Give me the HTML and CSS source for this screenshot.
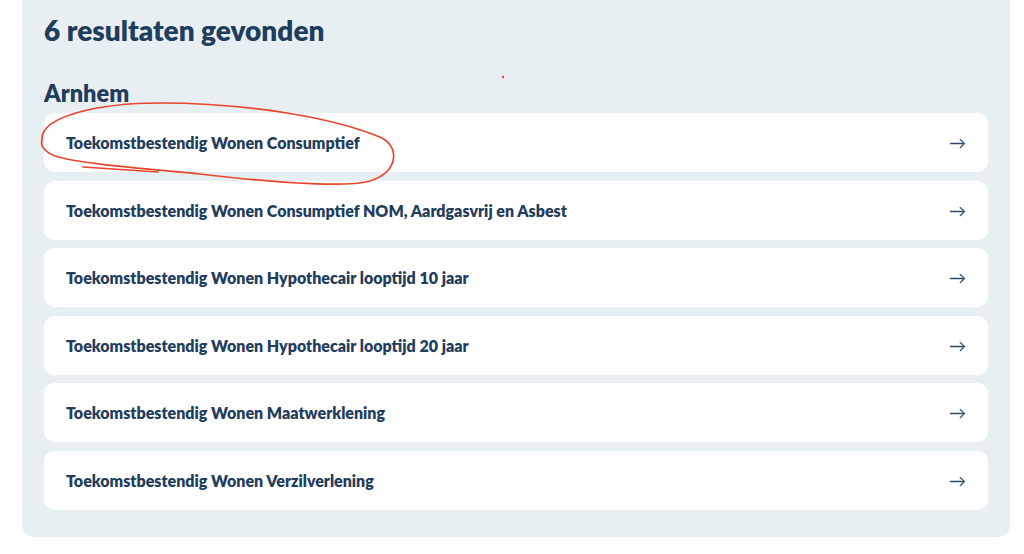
FILE: index.html
```html
<!DOCTYPE html>
<html lang="nl">
<head>
    <meta charset="UTF-8">
    <meta name="viewport" content="width=device-width, initial-scale=1.0">
    <title>Resultaten</title>
    <link rel="stylesheet" href="styles.css">
</head>
<body>
    <div class="results">
        <h1>6 resultaten gevonden</h1>

        <h2>Arnhem</h2>
        <ul class="list">
            <li class="item"><span>Toekomstbestendig Wonen Consumptief</span><span class="arrow">&rarr;</span></li>
            <li class="item"><span>Toekomstbestendig Wonen Consumptief NOM, Aardgasvrij en Asbest</span><span class="arrow">&rarr;</span></li>
            <li class="item"><span>Toekomstbestendig Wonen Hypothecair looptijd 10 jaar</span><span class="arrow">&rarr;</span></li>
            <li class="item"><span>Toekomstbestendig Wonen Hypothecair looptijd 20 jaar</span><span class="arrow">&rarr;</span></li>
            <li class="item"><span>Toekomstbestendig Wonen Maatwerklening</span><span class="arrow">&rarr;</span></li>
            <li class="item"><span>Toekomstbestendig Wonen Verzilverlening</span><span class="arrow">&rarr;</span></li>
        </ul>
    </div>

    <!-- hand drawn marker on top of the screenshot -->
    <svg class="scribble" width="1024" height="554" viewBox="0 0 1024 554">
        <path d="M42,140 C40,116 100,103 160,103 C250,103 335,118 382,138 C400,148 398,172 370,181 C340,189 260,181 200,174 C150,169 80,164 55,156 C45,152 40,146 42,140 M83,167 L158,172" fill="none" stroke="#e8452c" stroke-width="1.7" stroke-linecap="round"/>
        <circle cx="503" cy="77" r="1.2" fill="#e8452c"/>
    </svg>
</body>
</html>
```

FILE: styles.css
```css
body {
    font-family: Lato, "Noto Sans", sans-serif;
    background-color: #fff;
    color: #1f3d5c;
    margin: 0;
}

.results {
    background-color: #e8eff3;
    margin: -20px 0 0 22px;
    width: 988px;
    box-sizing: border-box;
    padding: 32px 22px 27px;
    border-radius: 0 0 12px 12px;
}

h1 {
    font-size: 28px;
    font-weight: 800;
    margin: 0 0 32px;
    line-height: 36px;
}

h2 {
    font-size: 23.5px;
    font-weight: 800;
    margin: 0 0 7px;
    line-height: 26px;
}

.list {
    list-style: none;
    margin: 0;
    padding: 0;
    display: flex;
    flex-direction: column;
    gap: 8.5px;
}

.item {
    background-color: #fff;
    border-radius: 10px;
    height: 59px;
    padding: 0 22px;
    display: flex;
    align-items: center;
    justify-content: space-between;
    font-size: 16px;
    font-weight: 800;
}

.arrow {
    font-size: 17px;
    font-weight: 400;
    color: #2c4a68;
}

.scribble {
    position: absolute;
    left: 0;
    top: 0;
    pointer-events: none;
}
```
